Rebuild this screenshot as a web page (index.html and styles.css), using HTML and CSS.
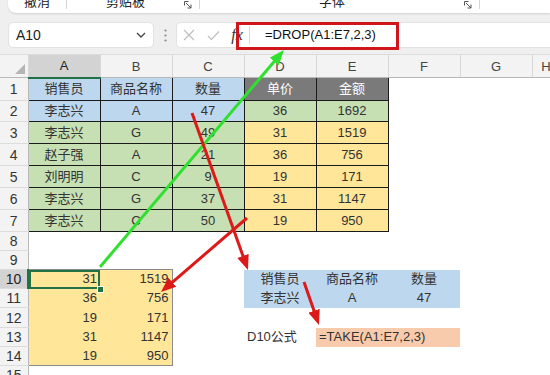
FILE: index.html
```html
<!DOCTYPE html>
<html lang="zh-CN">
<head>
    <meta charset="UTF-8">
    <meta name="viewport" content="width=device-width, initial-scale=1.0">
    <title>DROP 函数示例</title>
    <link rel="stylesheet" href="styles.css">
</head>
<body>
<div class="app">
    <div class="ribbon">
        <div class="group g-undo"><span class="label">撤消</span></div>
        <div class="group g-clip">
            <span class="label">剪贴板</span>
            <svg class="launcher" width="8" height="8" viewBox="0 0 8 8"><path d="M0.5 4.5V0.5H4.5M2 2L7 7M7 3.5V7H3.5" fill="none" stroke="#555" stroke-width="1"/></svg>
        </div>
        <div class="group g-font">
            <span class="label">字体</span>
            <svg class="launcher" width="8" height="8" viewBox="0 0 8 8"><path d="M0.5 4.5V0.5H4.5M2 2L7 7M7 3.5V7H3.5" fill="none" stroke="#555" stroke-width="1"/></svg>
        </div>
    </div>

    <div class="formula-row">
        <div class="name-box">
            <span>A10</span>
            <svg width="10" height="6" viewBox="0 0 10 6"><path d="M1 1L5 5L9 1" fill="none" stroke="#444" stroke-width="1.3"/></svg>
        </div>
        <div class="grip">
            <svg width="3" height="13" viewBox="0 0 3 13"><circle cx="1.5" cy="1.5" r="1.1" fill="#888"/><circle cx="1.5" cy="6.5" r="1.1" fill="#888"/><circle cx="1.5" cy="11.5" r="1.1" fill="#888"/></svg>
        </div>
        <div class="formula-bar">
            <span class="fb-btn"><svg width="12" height="12" viewBox="0 0 12 12"><path d="M1 1L11 11M11 1L1 11" stroke="#bdbdbd" stroke-width="1.2"/></svg></span>
            <span class="fb-btn"><svg width="13" height="11" viewBox="0 0 13 11"><path d="M1 6L4.5 9.5L12 1.5" fill="none" stroke="#bdbdbd" stroke-width="1.2"/></svg></span>
            <span class="fx">fx</span>
            <span class="fb-input">=DROP(A1:E7,2,3)</span>
        </div>
    </div>

    <table class="sheet">
        <colgroup>
            <col class="c-rh">
            <col class="c"><col class="c"><col class="c"><col class="c">
            <col class="c"><col class="c"><col class="c"><col class="c-h">
        </colgroup>
        <thead>
            <tr>
                <th class="corner"><svg width="10" height="10" viewBox="0 0 10 10"><path d="M10 0V10H0Z" fill="#b5b5b5"/></svg></th>
                <th class="hl">A</th><th>B</th><th>C</th><th>D</th><th>E</th><th>F</th><th>G</th><th>H</th>
            </tr>
        </thead>
        <tbody>
            <tr class="r1">
                <th>1</th>
                <td class="t blue">销售员</td><td class="t blue">商品名称</td><td class="t blue">数量</td>
                <td class="t gray">单价</td><td class="t gray">金额</td><td></td><td></td><td></td>
            </tr>
            <tr class="r2">
                <th>2</th>
                <td class="t blue">李志兴</td><td class="t blue">A</td><td class="t blue">47</td>
                <td class="t green">36</td><td class="t green">1692</td><td></td><td></td><td></td>
            </tr>
            <tr class="r">
                <th>3</th>
                <td class="t green">李志兴</td><td class="t green">G</td><td class="t green">49</td>
                <td class="t yellow">31</td><td class="t yellow">1519</td><td></td><td></td><td></td>
            </tr>
            <tr class="r">
                <th>4</th>
                <td class="t green">赵子强</td><td class="t green">A</td><td class="t green">21</td>
                <td class="t yellow">36</td><td class="t yellow">756</td><td></td><td></td><td></td>
            </tr>
            <tr class="r">
                <th>5</th>
                <td class="t green">刘明明</td><td class="t green">C</td><td class="t green">9</td>
                <td class="t yellow">19</td><td class="t yellow">171</td><td></td><td></td><td></td>
            </tr>
            <tr class="r">
                <th>6</th>
                <td class="t green">李志兴</td><td class="t green">G</td><td class="t green">37</td>
                <td class="t yellow">31</td><td class="t yellow">1147</td><td></td><td></td><td></td>
            </tr>
            <tr class="r">
                <th>7</th>
                <td class="t green">李志兴</td><td class="t green">C</td><td class="t green">50</td>
                <td class="t yellow">19</td><td class="t yellow">950</td><td></td><td></td><td></td>
            </tr>
            <tr class="s">
                <th>8</th><td></td><td></td><td></td><td></td><td></td><td></td><td></td><td></td>
            </tr>
            <tr class="s">
                <th>9</th><td></td><td></td><td></td><td></td><td></td><td></td><td></td><td></td>
            </tr>
            <tr class="s">
                <th class="hl-row">10</th>
                <td class="yellow num ol ot sel">31</td><td class="yellow num or ot">1519</td><td></td>
                <td class="blue">销售员</td><td class="blue">商品名称</td><td class="blue">数量</td><td></td><td></td>
            </tr>
            <tr class="s">
                <th>11</th>
                <td class="yellow num ol">36</td><td class="yellow num or">756</td><td></td>
                <td class="blue">李志兴</td><td class="blue">A</td><td class="blue">47</td><td></td><td></td>
            </tr>
            <tr class="s2">
                <th>12</th>
                <td class="yellow num ol">19</td><td class="yellow num or">171</td><td></td>
                <td></td><td></td><td></td><td></td><td></td>
            </tr>
            <tr class="s">
                <th>13</th>
                <td class="yellow num ol">31</td><td class="yellow num or">1147</td><td></td>
                <td class="left">D10公式</td><td class="orange left" colspan="2">=TAKE(A1:E7,2,3)</td><td></td><td></td>
            </tr>
            <tr class="s">
                <th>14</th>
                <td class="yellow num ol ob">19</td><td class="yellow num or ob">950</td><td></td>
                <td></td><td></td><td></td><td></td><td></td>
            </tr>
            <tr class="s">
                <th>15</th><td></td><td></td><td></td><td></td><td></td><td></td><td></td><td></td>
            </tr>
        </tbody>
    </table>

    <svg class="overlay" width="550" height="375" viewBox="0 0 550 375">
        <defs>
            <marker id="head-red" viewBox="0 0 10 10" refX="7" refY="5" markerWidth="5" markerHeight="5" orient="auto">
                <path d="M0 1L10 5L0 9Z" fill="#dc1a1a"/>
            </marker>
            <marker id="head-green" viewBox="0 0 10 10" refX="7" refY="5" markerWidth="5" markerHeight="5" orient="auto">
                <path d="M0 1L10 5L0 9Z" fill="#2fe02f"/>
            </marker>
        </defs>
        <rect class="frame" x="237.5" y="23.5" width="160" height="25"/>
        <line class="arrow-green" x1="100" y1="267" x2="281" y2="53.5" marker-end="url(#head-green)"/>
        <line class="arrow-red" x1="192" y1="113" x2="246.5" y2="265.8" marker-end="url(#head-red)"/>
        <line class="arrow-red" x1="247" y1="218" x2="164.4" y2="289.1" marker-end="url(#head-red)"/>
        <line class="arrow-red" x1="304" y1="282" x2="317.5" y2="320.7" marker-end="url(#head-red)"/>
    </svg>
</div>
</body>
</html>
```

FILE: styles.css
```css
body {
    margin: 0;
    background-color: #efefef;
    font-family: "Liberation Sans", "Noto Sans CJK SC", sans-serif;
    color: #333;
}
.app {
    position: relative;
    width: 550px;
    height: 375px;
    overflow: hidden;
    background-color: #efefef;
}

/* ribbon, only its bottom edge is visible */
.ribbon {
    display: flex;
    height: 13px;
    margin-left: 8px;
    background-color: #fff;
    border-radius: 0 0 0 8px;
    box-shadow: 0 1px 2px rgba(0,0,0,0.12);
    overflow: hidden;
}
.group {
    display: flex;
    align-items: flex-start;
    height: 9px;
    border-right: 1px solid #d4d4d4;
    box-sizing: border-box;
}
.g-undo { width: 59px; }
.g-clip { width: 133px; }
.g-font { width: 280px; }
.label {
    flex: 1;
    text-align: center;
    font-size: 13px;
    line-height: 13px;
    margin-top: -5px;
    color: #222;
}
.launcher {
    margin: 1px 7px 0 0;
}

/* name box + formula bar */
.formula-row {
    display: flex;
    align-items: center;
    height: 26px;
    margin-top: 9px;
}
.name-box {
    display: flex;
    align-items: center;
    justify-content: space-between;
    box-sizing: border-box;
    width: 146px;
    height: 26px;
    margin-left: 8px;
    padding: 0 7px 0 7px;
    background-color: #fff;
    border: 1px solid #e2e2e2;
    border-radius: 5px;
    font-size: 14px;
    color: #222;
}
.grip {
    display: flex;
    justify-content: center;
    width: 22px;
}
.formula-bar {
    flex: 1;
    display: flex;
    align-items: center;
    height: 26px;
    box-sizing: border-box;
    background-color: #fff;
    border: 1px solid #e2e2e2;
    border-right: none;
    border-radius: 5px 0 0 5px;
}
.fb-btn {
    display: flex;
    justify-content: center;
    width: 24px;
}
.fx {
    width: 24px;
    text-align: center;
    font-family: "Liberation Serif", serif;
    font-style: italic;
    font-size: 16px;
    color: #333;
}
.fb-input {
    height: 18px;
    padding-left: 15px;
    border-left: 1px solid #d9d9d9;
    font-size: 13px;
    line-height: 18px;
    color: #111;
}

/* sheet grid */
.sheet {
    margin-top: 6px;
    width: 560px;
    table-layout: fixed;
    border-collapse: collapse;
    border-spacing: 0;
}
.c-rh { width: 28px; }
.c { width: 72px; }
.c-h { width: 28px; }
.sheet th {
    padding: 0;
    font-weight: normal;
    background-color: #f3f3f3;
}
.sheet thead th {
    height: 19px;
    font-size: 13px;
    color: #444;
    border-top: 1px solid #dcdcdc;
    border-right: 1px solid #d8d8d8;
    border-bottom: 1px solid #b8b8b8;
}
.sheet thead th.corner {
    text-align: right;
    vertical-align: bottom;
    padding: 0 3px 3px 0;
    line-height: 0;
}
.sheet thead th.hl {
    background-color: #d3d3d3;
    color: #222;
    border-bottom: 2px solid #217346;
}
.sheet tbody th {
    font-size: 14px;
    color: #333;
    border-right: 1px solid #b8b8b8;
    border-bottom: 1px solid #dcdcdc;
}
.sheet tbody th.hl-row {
    background-color: #d3d3d3;
    color: #222;
    border-right: 2px solid #217346;
}
.r1 { height: 23px; }
.r2 { height: 21px; }
.r { height: 22px; }
.s { height: 19px; }
.s2 { height: 20px; }
.sheet td {
    padding: 0 3px;
    font-size: 13px;
    line-height: 16px;
    text-align: center;
    white-space: nowrap;
    overflow: hidden;
    background-color: #fff;
    color: #333;
}
.sheet td.t { border: 1px solid #1a1a1a; }
.blue { background-color: #bdd7ee !important; }
.green { background-color: #c6e0b4 !important; }
.yellow { background-color: #ffe699 !important; }
.orange { background-color: #f8cbad !important; }
.gray { background-color: #7a7a7a !important; color: #fff !important; }
.num { text-align: right !important; }
.left { text-align: left !important; }
.sheet td.ol { border-left: 1px solid #8a8a8a; }
.sheet td.or { border-right: 1px solid #8a8a8a; }
.sheet td.ot { border-top: 1px solid #8a8a8a; }
.sheet td.ob { border-bottom: 1px solid #8a8a8a; }
.sheet td.sel {
    position: relative;
    overflow: visible;
    box-shadow: inset 0 0 0 2px #217346;
}
.sheet td.sel::after {
    content: "";
    position: absolute;
    right: -4px;
    bottom: -4px;
    width: 5px;
    height: 5px;
    background-color: #217346;
    border: 1px solid #fff;
}

/* annotation layer */
.overlay {
    position: absolute;
    top: 0;
    left: 0;
    pointer-events: none;
}
.frame {
    fill: none;
    stroke: #d0161b;
    stroke-width: 3;
}
.arrow-red {
    stroke: #dc1a1a;
    stroke-width: 3;
}
.arrow-green {
    stroke: #2fe02f;
    stroke-width: 3;
}
```
